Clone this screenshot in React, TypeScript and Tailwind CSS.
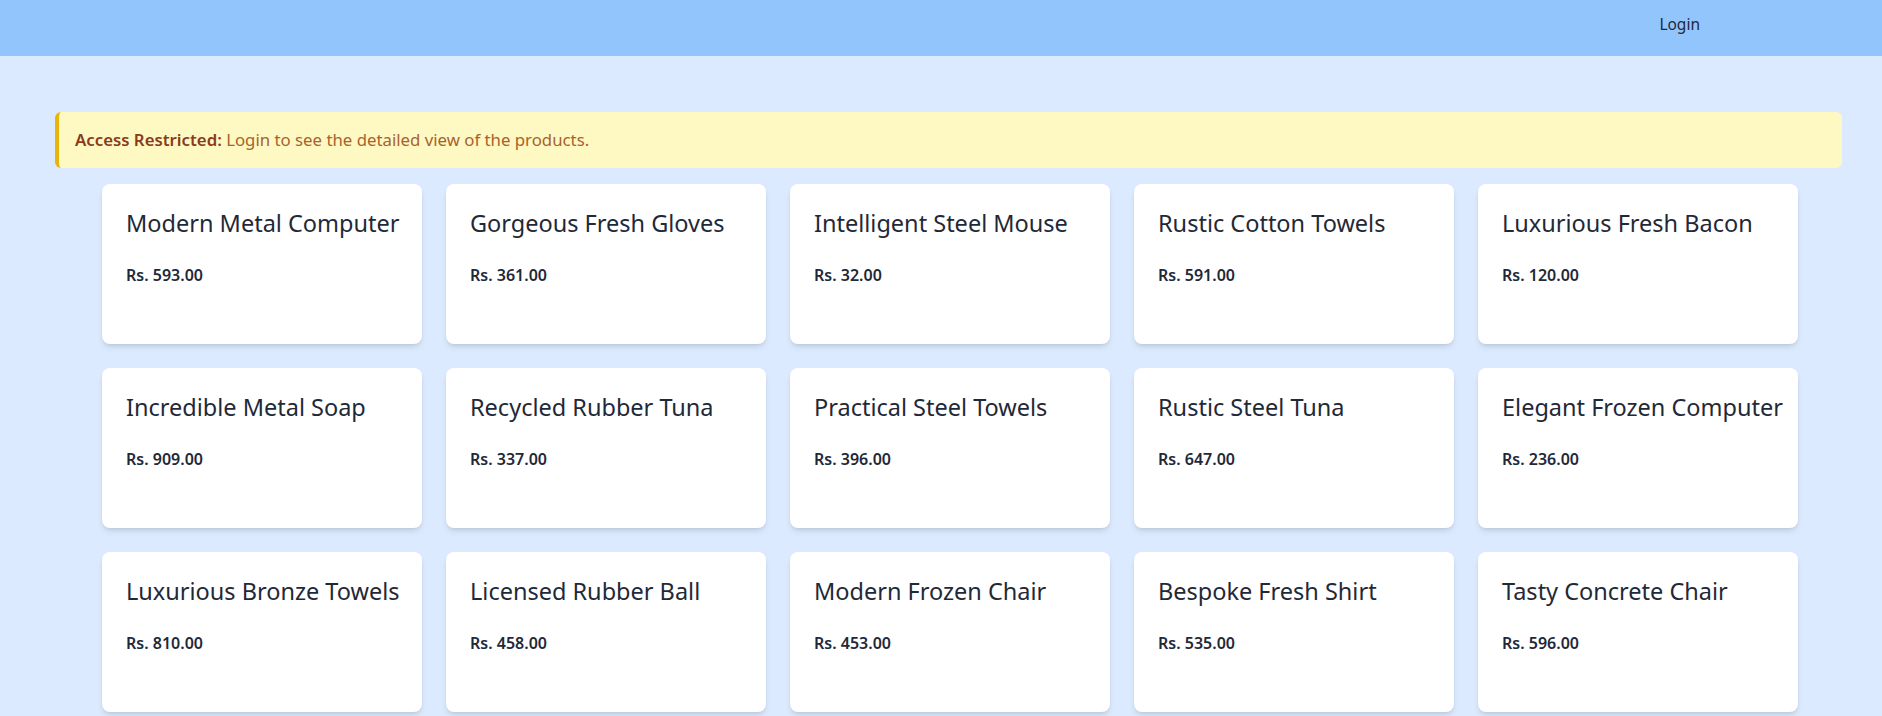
import React from "react";

const products: { name: string; price: string }[] = [
  { name: "Modern Metal Computer", price: "593.00" },
  { name: "Gorgeous Fresh Gloves", price: "361.00" },
  { name: "Intelligent Steel Mouse", price: "32.00" },
  { name: "Rustic Cotton Towels", price: "591.00" },
  { name: "Luxurious Fresh Bacon", price: "120.00" },
  { name: "Incredible Metal Soap", price: "909.00" },
  { name: "Recycled Rubber Tuna", price: "337.00" },
  { name: "Practical Steel Towels", price: "396.00" },
  { name: "Rustic Steel Tuna", price: "647.00" },
  { name: "Elegant Frozen Computer", price: "236.00" },
  { name: "Luxurious Bronze Towels", price: "810.00" },
  { name: "Licensed Rubber Ball", price: "458.00" },
  { name: "Modern Frozen Chair", price: "453.00" },
  { name: "Bespoke Fresh Shirt", price: "535.00" },
  { name: "Tasty Concrete Chair", price: "596.00" },
];

export default function App() {
  return (
    <div
      className="min-h-screen bg-[#dbeafe] text-[#1f2937]"
      style={{ fontFamily: '"Noto Sans", "Open Sans", sans-serif' }}
    >
      <nav className="h-14 bg-[#93c5fd] flex items-center justify-end pr-[182px] pb-2">
        <button className="text-[15.5px] leading-6 text-[#1f2937]">Login</button>
      </nav>
      <main className="pt-14">
        <div className="ml-[55px] mr-[40px] rounded-md border-l-4 border-[#eab308] bg-[#fef9c3] py-4 pl-4 text-[16.8px] leading-6 text-[#a8622c]">
          <span className="font-semibold text-[#8b3a1e]">Access Restricted:</span>{" "}
          Login to see the detailed view of the products.
        </div>
        <div className="ml-[102px] mt-4 grid grid-cols-[repeat(5,320px)] gap-6">
          {products.map((p) => (
            <div
              key={p.name}
              className="h-40 rounded-lg bg-white px-6 pt-[23px] pb-6 shadow-md whitespace-nowrap"
            >
              <h2 className="text-[23.5px] leading-8 text-[#1f2937] mb-6">
                {p.name}
              </h2>
              <p className="text-base leading-6 font-semibold text-[#1f2937]">
                Rs. {p.price}
              </p>
            </div>
          ))}
        </div>
      </main>
    </div>
  );
}
